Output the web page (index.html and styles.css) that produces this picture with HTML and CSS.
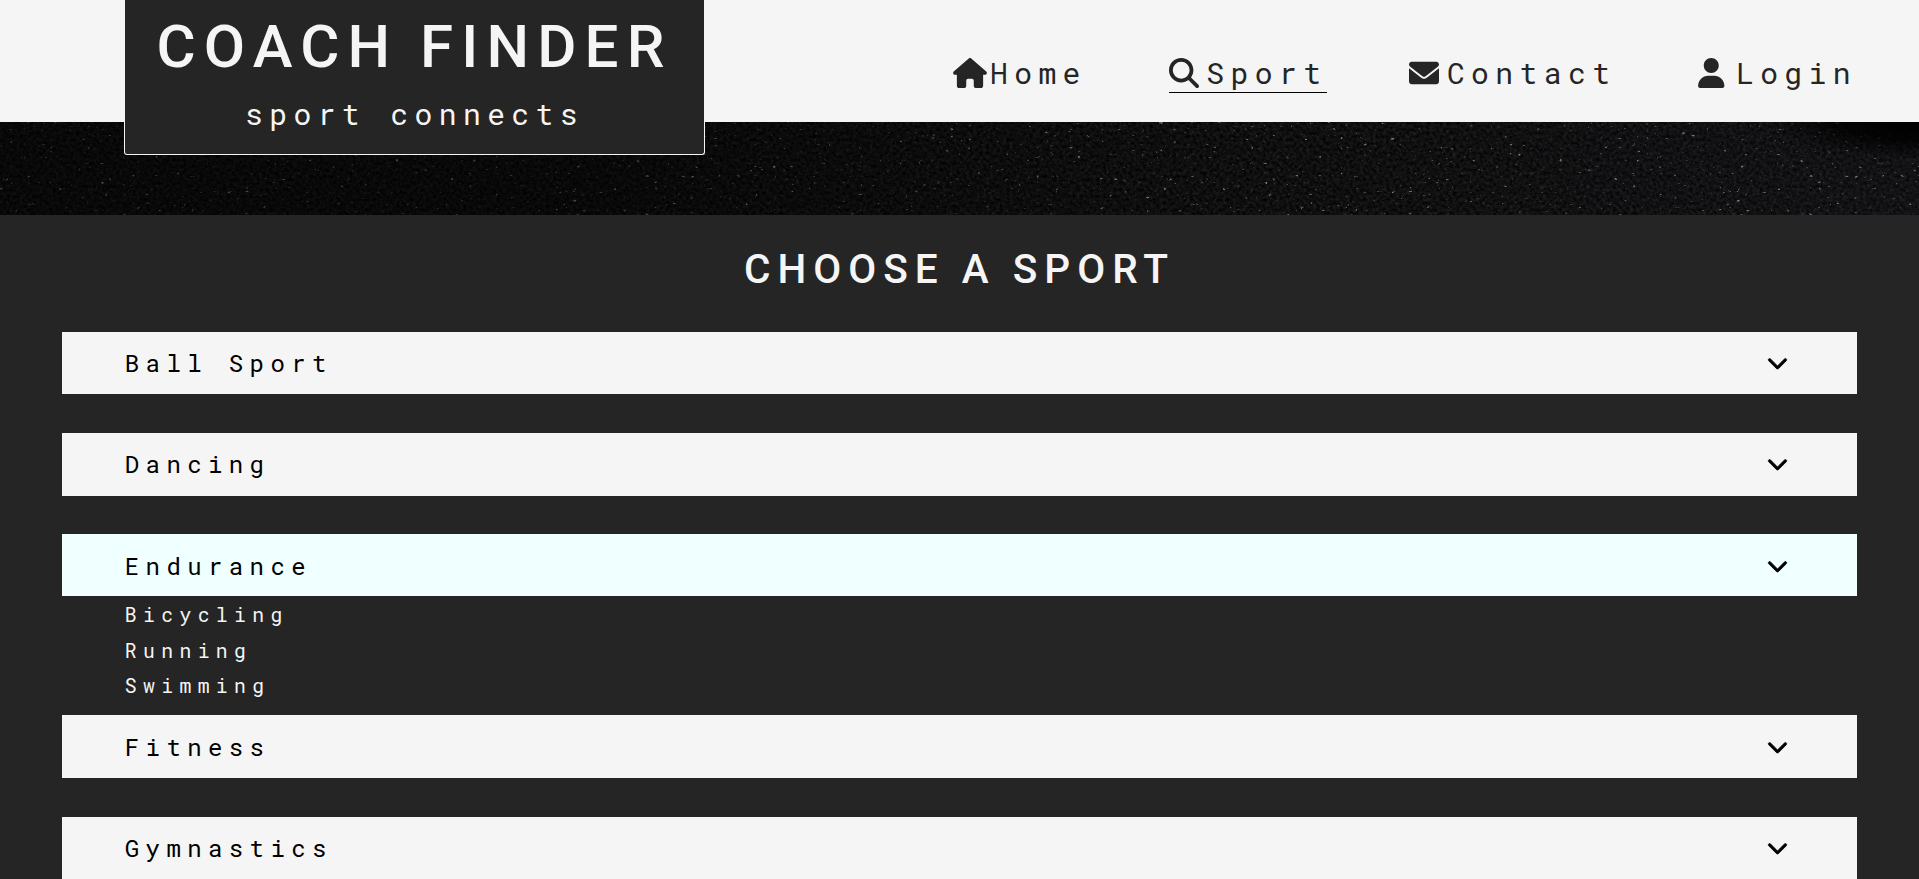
FILE: index.html
```html
<!DOCTYPE html>
<html lang="en">
<head>
<meta charset="utf-8">
<title>Coach Finder</title>
<link rel="stylesheet" href="styles.css">
</head>
<body>
<header class="header">
  <div class="logo">
    <h1 class="logo-title">COACH FINDER</h1>
    <p class="logo-tagline">sport connects</p>
  </div>
  <nav class="nav">
    <a class="nav-link nav-home"><svg class="icon icon-home" viewBox="0 0 576 512"><path d="M575.8 255.5c0 18-15 32.1-32 32.1h-32l.7 160.2c0 2.700-.2 5.400-.5 8.100V472c0 22.100-17.900 40-40 40H392c-22.100 0-40-17.900-40-40V384c0-17.700-14.300-32-32-32H256c-17.700 0-32 14.300-32 32v88c0 22.100-17.900 40-40 40H104c-22.100 0-40-17.900-40-40V287.600H32c-18 0-32-14-32-32.100c0-9 3-17 10-24L266.400 8c7-7 15-8 22-8s15 2 21 7L564.800 231.500c8 7 12 15 11 24z"/></svg>Home</a>
    <a class="nav-link active"><svg class="icon" viewBox="0 0 512 512"><path d="M416 208c0 45.9-14.9 88.3-40 122.7L502.6 457.4c12.5 12.5 12.5 32.8 0 45.3s-32.8 12.5-45.3 0L330.7 376c-34.400 25.200-76.800 40-122.700 40C93.100 416 0 322.900 0 208S93.100 0 208 0S416 93.100 416 208zM208 352a144 144 0 1 0 0-288 144 144 0 1 0 0 288z"/></svg>Sport</a>
    <a class="nav-link"><svg class="icon" viewBox="0 0 512 512"><path d="M256 352c-16.530 0-33.060-5.422-47.160-16.410L0 173.200V400C0 426.500 21.490 448 48 448h416c26.510 0 48-21.490 48-48V173.200l-208.800 162.500C289.100 346.600 272.500 352 256 352zM16.290 145.300l212.200 165.100c16.190 12.600 38.870 12.600 55.060 0l212.200-165.100C505.100 137.300 512 125 512 112C512 85.490 490.500 64 464 64h-416C21.490 64 0 85.490 0 112C0 125 6.010 137.300 16.290 145.300z"/></svg>Contact</a>
    <a class="nav-link"><svg class="icon icon-user" viewBox="0 0 448 512"><path d="M224 256c70.700 0 128-57.310 128-128s-57.300-128-128-128C153.300 0 96 57.310 96 128S153.300 256 224 256zM274.700 304H173.300C77.610 304 0 381.600 0 477.300c0 19.140 15.520 34.670 34.660 34.670h378.700C432.500 512 448 496.500 448 477.300C448 381.600 370.400 304 274.700 304z"/></svg>Login</a>
  </nav>
</header>
<div class="hero">
  <svg class="asphalt" width="1919" height="93">
    <defs>
      <filter id="grain" x="0" y="0" width="100%" height="100%" color-interpolation-filters="sRGB">
        <feTurbulence type="fractalNoise" baseFrequency="0.3" numOctaves="3" seed="7"/>
        <feColorMatrix values="0.18 0 0 0 -0.026  0.18 0 0 0 -0.026  0.18 0 0 0 -0.024  0 0 0 0 1"/>
      </filter>
      <filter id="specks" x="0" y="0" width="100%" height="100%" color-interpolation-filters="sRGB">
        <feTurbulence type="fractalNoise" baseFrequency="0.22 0.32" numOctaves="2" seed="21"/>
        <feColorMatrix values="0 0 0 0 0.55  0 0 0 0 0.55  0 0 0 0 0.55  7 0 0 0 -5"/>
      </filter>
      <linearGradient id="shade">
        <stop offset="0" stop-color="#000" stop-opacity=".5"/>
        <stop offset=".3" stop-color="#000" stop-opacity=".5"/>
        <stop offset=".65" stop-color="#000" stop-opacity=".1"/>
        <stop offset="1" stop-color="#223" stop-opacity=".15"/>
      </linearGradient>
      <radialGradient id="corner" cx="0" cy="0" r="1" gradientUnits="userSpaceOnUse" gradientTransform="translate(1919 0) scale(150 38)">
        <stop offset="0" stop-color="#000"/>
        <stop offset=".5" stop-color="#000" stop-opacity=".8"/>
        <stop offset="1" stop-color="#000" stop-opacity="0"/>
      </radialGradient>
    </defs>
    <rect width="1919" height="93" filter="url(#grain)"/>
    <rect width="1919" height="93" filter="url(#specks)"/>
    <rect width="1919" height="93" fill="url(#shade)"/>
    <rect width="1919" height="93" fill="url(#corner)"/>
  </svg>
</div>
<main class="sports">
  <h2 class="sports-title">CHOOSE A SPORT</h2>
  <section class="group"><button class="bar">Ball Sport<svg class="chevron" viewBox="0 0 512 512"><path d="M233.400 406.600c12.500 12.500 32.800 12.500 45.300 0l192-192c12.500-12.500 12.500-32.800 0-45.300s-32.800-12.500-45.300 0L256 338.700 86.600 169.400c-12.500-12.500-32.800-12.500-45.300 0s-12.500 32.800 0 45.300z"/></svg></button></section>
  <section class="group"><button class="bar">Dancing<svg class="chevron" viewBox="0 0 512 512"><path d="M233.400 406.600c12.500 12.500 32.800 12.500 45.300 0l192-192c12.500-12.500 12.500-32.800 0-45.300s-32.800-12.500-45.300 0L256 338.700 86.600 169.400c-12.500-12.500-32.800-12.500-45.300 0s-12.500 32.800 0 45.300z"/></svg></button></section>
  <section class="group open"><button class="bar">Endurance<svg class="chevron" viewBox="0 0 512 512"><path d="M233.400 406.600c12.500 12.500 32.800 12.500 45.300 0l192-192c12.500-12.500 12.500-32.800 0-45.300s-32.800-12.500-45.300 0L256 338.700 86.600 169.400c-12.500-12.500-32.800-12.500-45.300 0s-12.500 32.800 0 45.300z"/></svg></button>
    <ul class="list"><li>Bicycling</li><li>Running</li><li>Swimming</li></ul>
  </section>
  <section class="group"><button class="bar">Fitness<svg class="chevron" viewBox="0 0 512 512"><path d="M233.400 406.600c12.500 12.500 32.800 12.500 45.300 0l192-192c12.500-12.500 12.500-32.800 0-45.300s-32.800-12.500-45.300 0L256 338.700 86.600 169.400c-12.500-12.500-32.800-12.500-45.300 0s-12.500 32.800 0 45.300z"/></svg></button></section>
  <section class="group"><button class="bar">Gymnastics<svg class="chevron" viewBox="0 0 512 512"><path d="M233.400 406.600c12.500 12.500 32.800 12.500 45.300 0l192-192c12.500-12.500 12.500-32.800 0-45.300s-32.800-12.500-45.300 0L256 338.700 86.600 169.400c-12.500-12.500-32.800-12.500-45.300 0s-12.500 32.800 0 45.300z"/></svg></button></section>
</main>
</body>
</html>
```
FILE: styles.css
```css
* { box-sizing: border-box; }
html, body { height: 100%; }
body {
  margin: 0;
  overflow: hidden;
  background: #252525;
  color: #f5f5f5;
  font-family: "Roboto Mono", "Liberation Mono", monospace;
  letter-spacing: 6.4px;
}
h1, h2, p, ul { margin: 0; padding: 0; font-weight: 400; }
.header {
  display: flex;
  justify-content: space-between;
  align-items: flex-start;
  height: 122px;
  padding: 0 62px 0 124px;
  background: #f5f5f5;
}
.logo {
  position: relative;
  z-index: 1;
  width: 581px;
  height: 155px;
  padding-top: 11px;
  text-align: center;
  background: #252525;
  border: 1px solid #f5f5f5;
  border-top: 0;
  border-radius: 0 0 3px 3px;
}
.logo-title {
  font: 500 60px/72px Roboto, sans-serif;
  letter-spacing: 8.2px;
  word-spacing: -1.5px;
  white-space: nowrap;
}
.logo-tagline { font-size: 29.7px; line-height: 40px; margin-top: 11px; }
.nav { display: flex; gap: 82px; padding-top: 53px; }
.nav-link {
  display: flex;
  align-items: center;
  height: 40px;
  font-size: 29.7px;
  color: #252525;
  border-bottom: 1px solid transparent;
}
.active { border-bottom-color: #000; }
.icon { flex: none; width: 30px; height: 30px; margin-right: 7.5px; fill: #252525; }
.icon-home { width: 34px; margin-right: 3px; }
.icon-user { width: 26.5px; margin-right: 11px; }
.hero { height: 93px; background: #0c0c0c; overflow: hidden; }
.asphalt { display: block; }
.sports { padding: 30px 62px 0; }
.sports-title {
  height: 48px;
  margin-bottom: 39px;
  text-align: center;
  font: 500 40.6px/48px Roboto, sans-serif;
  letter-spacing: 7px;
}
.group { margin-bottom: 38.9px; }
.bar {
  display: flex;
  align-items: center;
  justify-content: space-between;
  width: 100%;
  height: 62.35px;
  padding: 0 69px 0 62.8px;
  border: 0;
  background: #f5f5f5;
  color: #000;
  font: inherit;
  font-size: 24px;
  letter-spacing: 6.4px;
}
.chevron {
  width: 21px;
  height: 21px;
  margin-bottom: 1px;
  stroke: #000;
  stroke-width: 18;
  overflow: visible;
}
.open { margin-bottom: 12px; }
.open .bar { height: 62px; padding-top: 1px; background: #f0ffff; }
.list { list-style: none; padding: 0.7px 62.8px 0; font-size: 19.7px; line-height: 35.4px; }
```
